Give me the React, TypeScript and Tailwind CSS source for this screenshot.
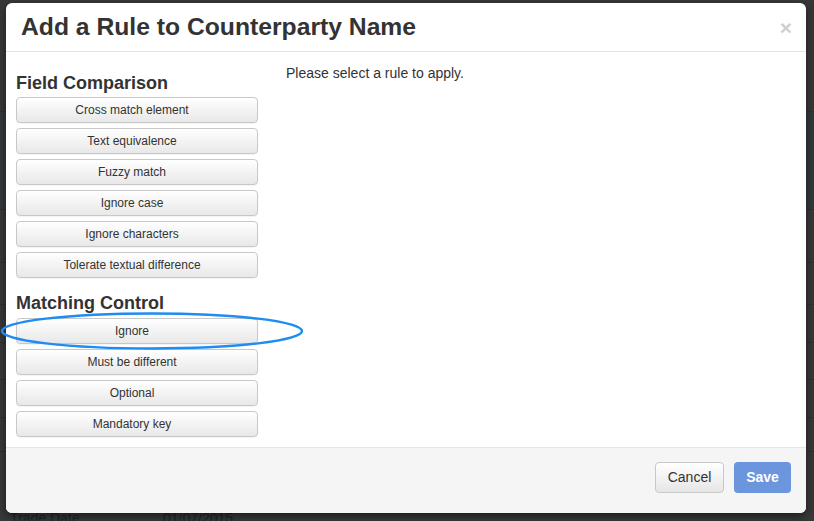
const fieldRules = [
  "Cross match element",
  "Text equivalence",
  "Fuzzy match",
  "Ignore case",
  "Ignore characters",
  "Tolerate textual difference",
];

const controlRules = ["Ignore", "Must be different", "Optional", "Mandatory key"];

const RuleButton = ({ label }: { label: string }) => (
  <button className="h-[26px] w-[242px] rounded-[4px] border border-[#c8c8c8] bg-gradient-to-b from-white to-[#e8e8e8] pr-[10px] text-[12px] text-[#333] shadow-[0_1px_1px_rgba(0,0,0,0.05)]">
    {label}
  </button>
);

const App = () => {
  return (
    <div className="relative h-[521px] w-[814px] overflow-hidden bg-[#383838] font-['Liberation_Sans',Arial,sans-serif]">
      {/* Dimmed page behind the modal */}
      <div className="flex h-full flex-col text-[#1c2430]">
        <div className="h-[112px] border-b border-[#2f2f2f]" />
        <div className="h-[98px] border-b border-[#2f2f2f] bg-[#333a3c]" />
        <div className="h-[53px] border-b border-[#2f2f2f]" />
        <div className="h-[42px] border-b border-[#2f2f2f]" />
        <div className="h-[38px] border-b border-[#2f2f2f]" />
        <div className="h-[37px] border-b border-[#2f2f2f]" />
        <div className="h-[38px] border-b border-[#2f2f2f]" />
        <div className="h-[34px] border-b border-[#2f2f2f]" />
        <div className="mb-[-5px] flex flex-1 items-end whitespace-nowrap pl-[10px] text-[14px] leading-[16px]">
          <span className="w-[153px]">Trade Date</span>
          <span>01/07/2015</span>
        </div>
      </div>

      {/* Modal */}
      <div className="absolute left-[6px] top-[3px] flex h-[510px] w-[800px] flex-col overflow-hidden rounded-[6px] bg-white shadow-[0_3px_9px_rgba(0,0,0,0.5)]">
        <div className="flex h-[49px] shrink-0 items-center justify-between border-b border-[#e5e5e5] pl-[15px] pr-[14px]">
          <h1 className="mt-[1px] text-[24.7px] font-bold leading-none text-[#333]">Add a Rule to Counterparty Name</h1>
          <span className="text-[21px] font-bold leading-none text-[#cfcfcf]">×</span>
        </div>

        <div className="flex flex-1 pl-[10px]">
          <div className="flex w-[270px] flex-col">
            <h2 className="mt-[20px] text-[18px] font-bold leading-[22px] text-[#333]">Field Comparison</h2>
            <div className="mt-[3px] flex flex-col gap-[5px]">
              {fieldRules.map((r) => (
                <RuleButton key={r} label={r} />
              ))}
            </div>
            <h2 className="mt-[14px] text-[18px] font-bold leading-[22px] text-[#333]">Matching Control</h2>
            <div className="mt-[4px] flex flex-col gap-[5px]">
              {controlRules.map((r) => (
                <RuleButton key={r} label={r} />
              ))}
            </div>
          </div>
          <p className="mt-[11px] text-[14px] leading-[20px] text-[#333]">Please select a rule to apply.</p>
        </div>

        <div className="flex h-[66px] shrink-0 items-start justify-end gap-[10px] border-t border-[#e5e5e5] bg-[#f5f5f5] pr-[15px] pt-[14px]">
          <button className="h-[31px] w-[69px] rounded-[4px] border border-[#c8c8c8] bg-gradient-to-b from-white to-[#e6e6e6] text-[14px] text-[#333]">
            Cancel
          </button>
          <button className="h-[31px] w-[57px] rounded-[4px] bg-[#6b95dd] text-[14px] font-bold text-white">
            Save
          </button>
        </div>
      </div>

      {/* Annotation ellipse */}
      <svg className="absolute left-0 top-0" width="814" height="521" viewBox="0 0 814 521" fill="none">
        <ellipse cx="152" cy="331" rx="150" ry="17.5" stroke="#1e8cf2" strokeWidth="2.5" />
      </svg>
    </div>
  );
};

export default App;
